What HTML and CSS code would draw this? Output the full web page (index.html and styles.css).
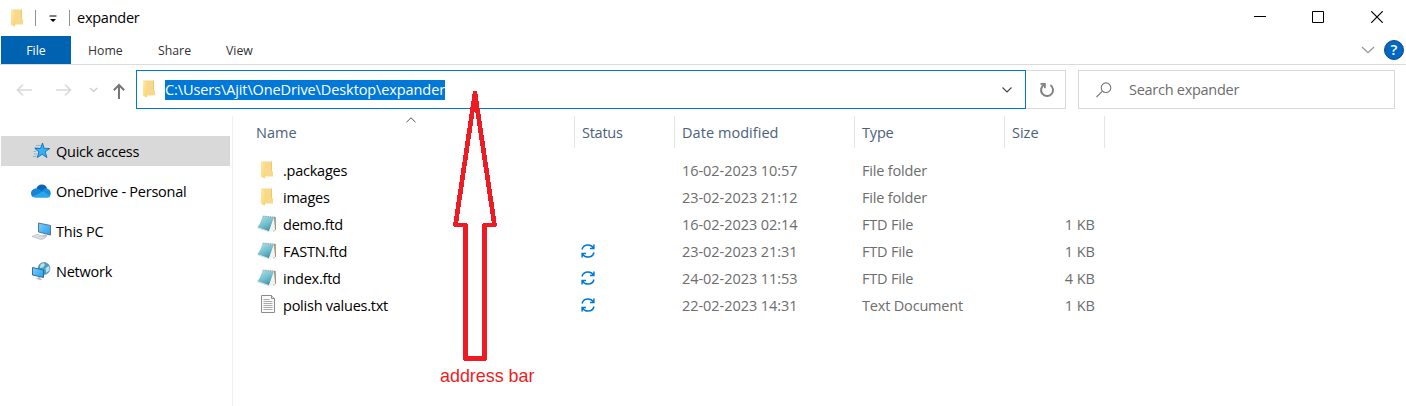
FILE: index.html
```html
<!DOCTYPE html>
<html lang="en">
<head>
<meta charset="utf-8">
<title>expander</title>
<link rel="stylesheet" href="styles.css">
</head>
<body>
<svg class="defs" width="0" height="0" aria-hidden="true">
  <defs>
    <linearGradient id="fold" x1="0" y1="0" x2="1" y2="1"><stop offset="0" stop-color="#ffebae"/><stop offset="1" stop-color="#fbd266"/></linearGradient>
    <linearGradient id="teal" x1="0" y1="0" x2=".6" y2="1"><stop offset="0" stop-color="#b4e2ec"/><stop offset=".6" stop-color="#74bfce"/><stop offset="1" stop-color="#4295aa"/></linearGradient>
    <linearGradient id="screen" x1="0" y1="0" x2="1" y2="1"><stop offset="0" stop-color="#7dd0ff"/><stop offset="1" stop-color="#1f9ff0"/></linearGradient>
    <symbol id="folder" viewBox="0 0 14 18"><path d="M1 .5h11v9.700l1 .300v5H4z" fill="#f6d98a"/><path d="M11.200 .5h.8v9.500h-.8z" fill="#e9c566"/><path d="M1 .5l4 2v15l-4-1.600z" fill="url(#fold)"/></symbol>
    <symbol id="notepad" viewBox="0 0 20 18"><path d="M17 1.500l1.800.8.200 12.200-3 2.300z" fill="#a7916c"/><path d="M7 .6l10 .9.800 13.500-6.800 2.500z" fill="#e3ebee"/><path d="M5.600 1.300L17 2.400 12 16.200.3 12.300C2.700 9.500 4.300 5.800 5.600 1.300z" fill="url(#teal)"/><path d="M16.600 3.500l1.500 11.500-6.400 2.200z" fill="#f1f3f6"/><path d="M.3 12.300L12 16.200v1L.8 13.500z" fill="#d5dee2"/><path d="M5.800 1.200l11.400 1" stroke="#6d8b93" stroke-width=".8" stroke-dasharray="1 .8"/></symbol>
    <symbol id="txt" viewBox="0 0 16 20"><path d="M1.500 1.500h10l3 3v14h-13z" fill="#fafafa" stroke="#8b8b8b"/><path d="M11.500 1.500v3h3" fill="#ddd" stroke="#8b8b8b"/><path d="M3.500 5.500h6M3.500 7.500h9M3.500 9.500h9M3.500 11.500h9M3.500 13.500h9M3.500 15.500h9" stroke="#aaa"/></symbol>
    <symbol id="sync" viewBox="0 0 14 14"><path d="M1 5.500C1.700 2.700 4 .9 7 .9c2.400 0 4.300 1.100 5.500 3M12.900.5v4H9M13 8.500c-.7 2.800-3 4.600-6 4.600-2.400 0-4.300-1.100-5.500-3M1.100 13.500v-4H5" fill="none" stroke="#0078d7" stroke-width="1.500"/></symbol>
  </defs>
</svg>
<div class="window">
  <header class="titlebar">
    <svg class="title-folder" width="14" height="18"><use href="#folder"/></svg>
    <i class="sep"></i>
    <svg class="qat" width="8" height="8" viewBox="0 0 8 8"><path d="M.5.500h7v1h-7zM1 4h6L4 7z"/></svg>
    <i class="sep"></i>
    <h1 class="title">expander</h1>
    <svg class="caption" width="118" height="14" viewBox="0 0 118 14" fill="none" stroke="#000"><path d="M0 6.500h12M58.500 1.500h11v11h-11z"/></svg>
    <svg class="close" width="12" height="12" viewBox="0 0 12 12" fill="none" stroke="#000" stroke-width="1.200"><path d="M.3.300l11.400 11.400M11.700.300L.3 11.700"/></svg>
  </header>
  <nav class="ribbon">
    <a class="tab file">File</a><a class="tab home">Home</a><a class="tab share">Share</a><a class="tab view">View</a>
    <svg class="expand" width="14" height="8" viewBox="0 0 14 8" fill="none" stroke="#999" stroke-width="1.300"><path d="M1 1l6 5.700L13 1"/></svg>
    <svg class="help" width="20" height="20" viewBox="0 0 20 20"><circle cx="10" cy="10" r="9.500" fill="#0067c5" stroke="#17477c"/><text x="10" y="15.200" text-anchor="middle" class="q">?</text></svg>
  </nav>
  <div class="toolbar">
    <svg class="history" width="136" height="40" viewBox="0 0 136 40" fill="none"><path d="M17.500 20H32M23 14.500L17.500 20l5.500 5.500M56 20h14.500M65 14.500l5.500 5.500-5.500 5.500" stroke="#d9d9d9" stroke-width="1.700"/><path d="M90 18l3.600 3.500L97.200 18" stroke="#d0d0d0" stroke-width="1.600"/><path d="M119 29V14.500M113.800 20.300L119 15l5.200 5.300" stroke="#767676" stroke-width="2"/></svg>
    <div class="address">
      <svg class="addr-folder" width="14" height="18"><use href="#folder"/></svg>
      <span class="path">C:\Users\Ajit\OneDrive\Desktop\expander</span>
      <svg class="drop" width="10" height="6" viewBox="0 0 10 6" fill="none" stroke="#444" stroke-width="1.100"><path d="M.5.500L5 5 9.500.500"/></svg>
    </div>
    <div class="refresh"><svg width="16" height="16" viewBox="0 0 16 16" fill="none" stroke="#808080" stroke-width="2"><path d="M5.200 2.700A6 6 0 1 0 11.400 3"/><path d="M1.500 1.900h4.400v4.300" stroke-width="1.700"/></svg></div>
    <div class="search">
      <svg width="16" height="16" viewBox="0 0 16 16" fill="none" stroke="#777" stroke-width="1.100"><circle cx="10" cy="5.700" r="4.800"/><path d="M6.500 9.200L.5 15"/></svg>
      <span>Search expander</span>
    </div>
  </div>
  <main class="body">
    <aside class="side">
      <div class="item selected"><svg width="20" height="20" viewBox="0 0 20 20"><path d="M11.500 2l1.600 5.300 5.700.2-4.700 3.300 1.900 5.700-4.900-3.200-4.800 3.200 1.600-5.600-4-3.400h5.500z" fill="#35b0f4" stroke="#1271b5" stroke-width=".9"/><path d="M5 4.500H9.500M3.500 6.500h4M2.500 10.500h2.500M3 13h3M2 15.500h3.500" stroke="#74aed3" stroke-width=".8"/></svg><span>Quick access</span></div>
      <div class="item"><svg width="20" height="20" viewBox="0 0 20 20"><path d="M5.300 8C6 5 8.200 3.500 10.800 3.500c2.500 0 4.600 1.500 5.300 3.900L10 13z" fill="#0864b8"/><path d="M5 7.600c-2.600.1-5 2-5 4.800 0 1.500.8 2.900 2 3.700l10-4.600C9.700 8.800 7.500 7.500 5 7.600z" fill="#1685d9"/><path d="M15.500 7.300c-2 .1-3.500 1.100-4.500 3.200l7.800 4.800c1.800-2.600 1.300-6.600-3.300-8z" fill="#1490df"/><path d="M11.200 10.500L2 16c.7.500 1.500.7 2.500.7h11.800c1.500 0 2.500-.6 3-1.700z" fill="#28a8ea"/></svg><span>OneDrive - Personal</span></div>
      <div class="item"><svg width="20" height="20" viewBox="0 0 20 20"><path d="M7.500 2l12 2.500v9.500L7.500 11z" fill="url(#screen)" stroke="#556a78" stroke-width=".9"/><path d="M13 13.500l3 .6v1.600l-5-.8z" fill="#b7c1c8"/><path d="M1 15.500l5-2.200 9 2.800-4.500 2.600z" fill="#e5eaed" stroke="#a4adb3" stroke-width=".6"/><path d="M3.500 15.400l8.500 2.500M5.500 14.500l8 2.500" stroke="#bac2c7" stroke-width=".5"/></svg><span>This PC</span></div>
      <div class="item"><svg width="20" height="20" viewBox="0 0 20 20"><circle cx="13" cy="7.500" r="5.900" fill="#479fc4" stroke="#527f95" stroke-width=".7"/><path d="M9.500 3.500l3-1.500 1.500 2-2 2.500-3 .5zM14.500 7l3.500-2 .7 4-3.500 3z" fill="#bce0eb"/><path d="M1.500 6.500l11 2.500v7.500l-11-2.500z" fill="url(#screen)" stroke="#24638f" stroke-width=".9"/><path d="M7 15.700l2.500.5v1.500l2 .7-2.500.7-5-1.600 3-.3z" fill="#aeb9c0"/></svg><span>Network</span></div>
    </aside>
    <section class="list">
      <div class="row head">
        <span class="cell name"><span>Name</span><svg class="sort" width="10" height="6" viewBox="0 0 10 6" fill="none" stroke="#555"><path d="M.5 5.200L5 .8l4.500 4.400"/></svg></span><span class="cell status">Status</span><span class="cell date">Date modified</span><span class="cell type">Type</span><span class="cell size">Size</span>
      </div>
      <div class="row file-row"><span class="cell name"><svg class="fi" width="14" height="18"><use href="#folder"/></svg><span>.packages</span></span><span class="cell status"></span><span class="cell date">16-02-2023 10:57</span><span class="cell type">File folder</span><span class="cell size"></span></div>
      <div class="row file-row"><span class="cell name"><svg class="fi" width="14" height="18"><use href="#folder"/></svg><span>images</span></span><span class="cell status"></span><span class="cell date">23-02-2023 21:12</span><span class="cell type">File folder</span><span class="cell size"></span></div>
      <div class="row file-row"><span class="cell name"><svg class="ni" width="20" height="18"><use href="#notepad"/></svg><span>demo.ftd</span></span><span class="cell status"></span><span class="cell date">16-02-2023 02:14</span><span class="cell type">FTD File</span><span class="cell size">1 KB</span></div>
      <div class="row file-row"><span class="cell name"><svg class="ni" width="20" height="18"><use href="#notepad"/></svg><span>FASTN.ftd</span></span><span class="cell status"><svg width="14" height="14"><use href="#sync"/></svg></span><span class="cell date">23-02-2023 21:31</span><span class="cell type">FTD File</span><span class="cell size">1 KB</span></div>
      <div class="row file-row"><span class="cell name"><svg class="ni" width="20" height="18"><use href="#notepad"/></svg><span>index.ftd</span></span><span class="cell status"><svg width="14" height="14"><use href="#sync"/></svg></span><span class="cell date">24-02-2023 11:53</span><span class="cell type">FTD File</span><span class="cell size">4 KB</span></div>
      <div class="row file-row"><span class="cell name"><svg class="ti" width="16" height="20"><use href="#txt"/></svg><span>polish values.txt</span></span><span class="cell status"><svg width="14" height="14"><use href="#sync"/></svg></span><span class="cell date">22-02-2023 14:31</span><span class="cell type">Text Document</span><span class="cell size">1 KB</span></div>
    </section>
  </main>
  <div class="callout">
    <svg width="44" height="272" viewBox="0 0 44 272" fill="none" stroke="#ed1c24" stroke-width="4.700" stroke-linejoin="round" shape-rendering="crispEdges"><path d="M22 3L2.500 135h10v133.500h19V135H41.500z"/></svg>
    <span>address bar</span>
  </div>
</div>
</body>
</html>
```
FILE: styles.css
```css
* { box-sizing: border-box; }
body { margin: 0; background: #fff; font-family: "Open Sans", "Noto Sans", sans-serif; font-size: 14.5px; font-stretch: 93%; color: #000; }
svg { display: block; flex: none; }
.defs { position: absolute; }
.window { position: relative; width: 1406px; height: 406px; overflow: hidden; }

.titlebar { height: 36px; display: flex; align-items: center; padding-left: 10px; }
.title-folder { margin: -1px 11px 0 0; }
.sep { width: 1px; height: 16px; background: #909090; }
.qat { margin: 2px 12px 0 13px; }
.title { margin: -2px 0 0 7px; font-size: 14.5px; font-weight: 400; letter-spacing: -.25px; flex: 1; }
.caption { margin-top: -3px; }
.close { margin: -3px 23px 0 -1px; }

.ribbon { height: 29px; display: flex; border-bottom: 1px solid #dadbdc; padding-left: 1px; font-size: 12.3px; color: #333; }
.tab { height: 28px; line-height: 29px; }
.file { width: 70px; background: #0063b1; color: #fff; text-align: center; }
.home { margin-left: 17px; width: 70px; }
.share { width: 68px; }
.view { flex: 1; }
.expand { margin: 10px 8px 0 0; }
.help { margin: 4px 2px 0 1px; }
.q { font-size: 15px; font-weight: 600; fill: #fff; }

.toolbar { height: 51px; display: flex; padding-top: 5px; }
.address { width: 890px; height: 39px; border: 1px solid #0078d7; display: flex; align-items: center; padding-left: 5px; }
.addr-folder { margin: -1px 9px 0 0; }
.path { background: #0078d7; color: #fff; height: 20px; line-height: 20px; width: 280px; white-space: nowrap; letter-spacing: -.1px; }
.drop { margin-left: auto; margin-right: 13px; }
.refresh { width: 40px; height: 39px; border: 1px solid #d9d9d9; border-left: 0; display: flex; align-items: center; justify-content: center; padding-left: 2px; }
.search { margin-left: 12px; width: 317px; height: 39px; border: 1px solid #d9d9d9; display: flex; align-items: center; gap: 17px; padding-left: 17px; color: #6d6d6d; letter-spacing: -.27px; }

.body { display: flex; height: 290px; }
.side { width: 233px; border-right: 1px solid #f0f0f0; padding: 20px 2px 0 1px; display: flex; flex-direction: column; gap: 10px; letter-spacing: -.24px; }
.item { height: 30px; display: flex; align-items: center; gap: 5px; padding-left: 30px; }
.selected { background: #d9d9d9; }

.list { width: 872px; }
.row { height: 27px; display: grid; grid-template-columns: 342px 100px 180px 150px 100px; color: #6d6d6d; }
.cell { display: flex; align-items: center; padding-left: 7px; white-space: nowrap; }
.head { height: 32px; margin-bottom: 9px; color: #4c607a; }
.head .cell { border-right: 1px solid #e5e5e5; }
.head .name { padding-left: 23px; position: relative; }
.head .status { letter-spacing: -.25px; }
.head .date { letter-spacing: .05px; }
.sort { position: absolute; left: 173px; top: 1px; }
.date { letter-spacing: -.05px; }
.type { letter-spacing: -.18px; }
.file-row .name { color: #000; letter-spacing: -.24px; padding-left: 24px; }
.file-row .status { padding: 0 0 2px 6px; }
.file-row .size { justify-content: flex-end; padding-right: 10px; }
.fi { margin: -1px 9px 0 3px; }
.ni { margin: -2px 6px 0 0; }
.ti { margin: -3px 7px 0 3px; }

.callout { position: absolute; left: 440px; top: 90px; width: 110px; color: #ed1c24; font: 17.9px/20px "Liberation Sans", Arial, sans-serif; }
.callout svg { margin: 0 0 4px 13px; }
```
